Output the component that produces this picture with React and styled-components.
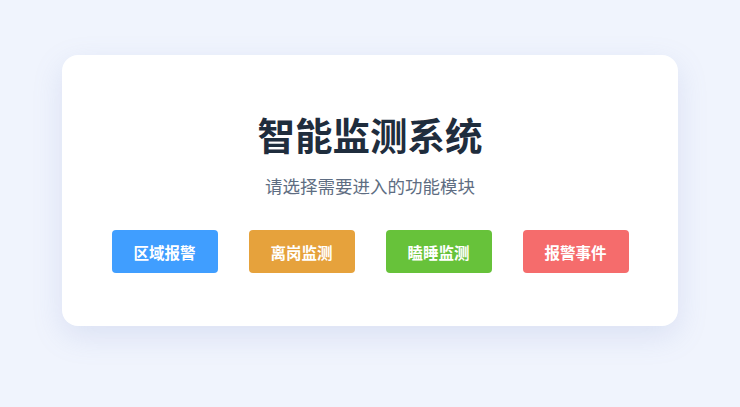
import React from "react";
import styled, { createGlobalStyle } from "styled-components";

const GlobalStyle = createGlobalStyle`
  html, body {
    margin: 0;
    padding: 0;
    background: #f0f4fd;
    font-family: "Noto Sans CJK SC", "Noto Sans", sans-serif;
  }
`;

const Page = styled.div`
  width: 740px;
  height: 407px;
  display: flex;
  justify-content: center;
  padding-top: 55px;
  box-sizing: border-box;
`;

const Card = styled.div`
  width: 616px;
  height: 271px;
  box-sizing: border-box;
  background: #ffffff;
  border-radius: 16px;
  box-shadow: 0 10px 30px rgba(120, 140, 200, 0.18);
  display: flex;
  flex-direction: column;
  align-items: center;
  padding-top: 56px;
`;

const Title = styled.h1`
  margin: 0;
  font-size: 37.5px;
  line-height: 46px;
  font-weight: 700;
  color: #1f2d3d;
`;

const Subtitle = styled.p`
  margin: 17px 0 0;
  font-size: 17.5px;
  line-height: 24px;
  color: #5e6d82;
`;

const Actions = styled.div`
  display: flex;
  gap: 31px;
  margin-top: 32px;
`;

const ActionButton = styled.button`
  width: 106px;
  height: 43px;
  border: none;
  border-radius: 4px;
  background: ${(p) => p.color};
  color: #ffffff;
  font-family: inherit;
  font-size: 15.5px;
  font-weight: 700;
  cursor: pointer;
`;

const modules = [
  { name: "区域报警", color: "#409eff" },
  { name: "离岗监测", color: "#e6a23c" },
  { name: "瞌睡监测", color: "#67c23a" },
  { name: "报警事件", color: "#f56c6c" },
];

export default function App() {
  return (
    <>
      <GlobalStyle />
      <Page>
        <Card>
          <Title>智能监测系统</Title>
          <Subtitle>请选择需要进入的功能模块</Subtitle>
          <Actions>
            {modules.map((m) => (
              <ActionButton key={m.name} color={m.color}>
                {m.name}
              </ActionButton>
            ))}
          </Actions>
        </Card>
      </Page>
    </>
  );
}
